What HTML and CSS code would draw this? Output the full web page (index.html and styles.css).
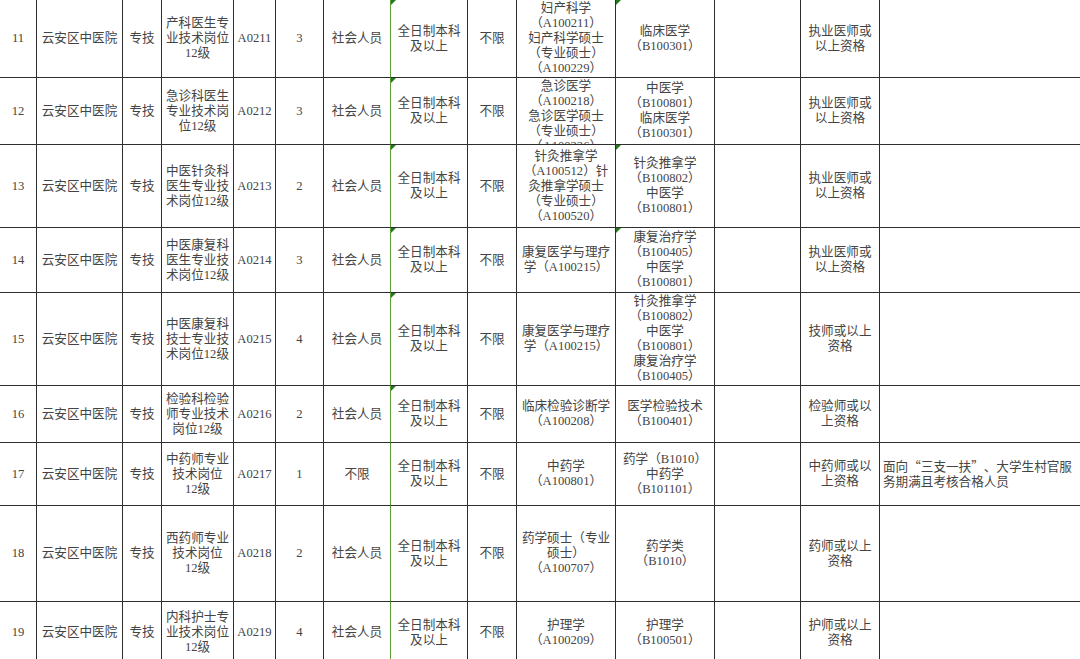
FILE: index.html
```html
<!DOCTYPE html>
<html lang="zh-CN">
<head>
<meta charset="utf-8">
<title>岗位表</title>
<link rel="stylesheet" href="styles.css">
</head>
<body>
<div class="sheet">
  <!-- row 11 -->
  <div class="cell"><div>11</div></div>
  <div class="cell"><div>云安区中医院</div></div>
  <div class="cell"><div>专技</div></div>
  <div class="cell"><div>产科医生专<br>业技术岗位<br>12级</div></div>
  <div class="cell"><div>A0211</div></div>
  <div class="cell"><div>3</div></div>
  <div class="cell g"><div>社会人员</div></div>
  <div class="cell tri"><div>全日制本科<br>及以上</div></div>
  <div class="cell"><div>不限</div></div>
  <div class="cell"><div>妇产科学<br>（A100211）<br>妇产科学硕士<br>（专业硕士）<br>（A100229）</div></div>
  <div class="cell tri"><div>临床医学<br>（B100301）</div></div>
  <div class="cell"><div></div></div>
  <div class="cell"><div>执业医师或<br>以上资格</div></div>
  <div class="cell last"><div></div></div>

  <!-- row 12 -->
  <div class="cell"><div>12</div></div>
  <div class="cell"><div>云安区中医院</div></div>
  <div class="cell"><div>专技</div></div>
  <div class="cell"><div>急诊科医生<br>专业技术岗<br>位12级</div></div>
  <div class="cell"><div>A0212</div></div>
  <div class="cell"><div>3</div></div>
  <div class="cell g"><div>社会人员</div></div>
  <div class="cell tri"><div>全日制本科<br>及以上</div></div>
  <div class="cell"><div>不限</div></div>
  <div class="cell top"><div>急诊医学<br>（A100218）<br>急诊医学硕士<br>（专业硕士）<br>（A100226）</div></div>
  <div class="cell"><div>中医学<br>（B100801）<br>临床医学<br>（B100301）</div></div>
  <div class="cell"><div></div></div>
  <div class="cell"><div>执业医师或<br>以上资格</div></div>
  <div class="cell last"><div></div></div>

  <!-- row 13 -->
  <div class="cell"><div>13</div></div>
  <div class="cell"><div>云安区中医院</div></div>
  <div class="cell"><div>专技</div></div>
  <div class="cell"><div>中医针灸科<br>医生专业技<br>术岗位12级</div></div>
  <div class="cell"><div>A0213</div></div>
  <div class="cell"><div>2</div></div>
  <div class="cell g"><div>社会人员</div></div>
  <div class="cell tri"><div>全日制本科<br>及以上</div></div>
  <div class="cell"><div>不限</div></div>
  <div class="cell"><div>针灸推拿学<br>（A100512）针<br>灸推拿学硕士<br>（专业硕士）<br>（A100520）</div></div>
  <div class="cell tri"><div>针灸推拿学<br>（B100802）<br>中医学<br>（B100801）</div></div>
  <div class="cell"><div></div></div>
  <div class="cell"><div>执业医师或<br>以上资格</div></div>
  <div class="cell last"><div></div></div>

  <!-- row 14 -->
  <div class="cell"><div>14</div></div>
  <div class="cell"><div>云安区中医院</div></div>
  <div class="cell"><div>专技</div></div>
  <div class="cell"><div>中医康复科<br>医生专业技<br>术岗位12级</div></div>
  <div class="cell"><div>A0214</div></div>
  <div class="cell"><div>3</div></div>
  <div class="cell g"><div>社会人员</div></div>
  <div class="cell tri"><div>全日制本科<br>及以上</div></div>
  <div class="cell"><div>不限</div></div>
  <div class="cell"><div>康复医学与理疗<br>学（A100215）</div></div>
  <div class="cell tri"><div>康复治疗学<br>（B100405）<br>中医学<br>（B100801）</div></div>
  <div class="cell"><div></div></div>
  <div class="cell"><div>执业医师或<br>以上资格</div></div>
  <div class="cell last"><div></div></div>

  <!-- row 15 -->
  <div class="cell"><div>15</div></div>
  <div class="cell"><div>云安区中医院</div></div>
  <div class="cell"><div>专技</div></div>
  <div class="cell"><div>中医康复科<br>技士专业技<br>术岗位12级</div></div>
  <div class="cell"><div>A0215</div></div>
  <div class="cell"><div>4</div></div>
  <div class="cell g"><div>社会人员</div></div>
  <div class="cell tri"><div>全日制本科<br>及以上</div></div>
  <div class="cell"><div>不限</div></div>
  <div class="cell"><div>康复医学与理疗<br>学（A100215）</div></div>
  <div class="cell"><div>针灸推拿学<br>（B100802）<br>中医学<br>（B100801）<br>康复治疗学<br>（B100405）</div></div>
  <div class="cell"><div></div></div>
  <div class="cell"><div>技师或以上<br>资格</div></div>
  <div class="cell last"><div></div></div>

  <!-- row 16 -->
  <div class="cell"><div>16</div></div>
  <div class="cell"><div>云安区中医院</div></div>
  <div class="cell"><div>专技</div></div>
  <div class="cell"><div>检验科检验<br>师专业技术<br>岗位12级</div></div>
  <div class="cell"><div>A0216</div></div>
  <div class="cell"><div>2</div></div>
  <div class="cell g"><div>社会人员</div></div>
  <div class="cell tri"><div>全日制本科<br>及以上</div></div>
  <div class="cell"><div>不限</div></div>
  <div class="cell"><div>临床检验诊断学<br>（A100208）</div></div>
  <div class="cell"><div>医学检验技术<br>（B100401）</div></div>
  <div class="cell"><div></div></div>
  <div class="cell"><div>检验师或以<br>上资格</div></div>
  <div class="cell last"><div></div></div>

  <!-- row 17 -->
  <div class="cell"><div>17</div></div>
  <div class="cell"><div>云安区中医院</div></div>
  <div class="cell"><div>专技</div></div>
  <div class="cell"><div>中药师专业<br>技术岗位<br>12级</div></div>
  <div class="cell"><div>A0217</div></div>
  <div class="cell"><div>1</div></div>
  <div class="cell g"><div>不限</div></div>
  <div class="cell"><div>全日制本科<br>及以上</div></div>
  <div class="cell"><div>不限</div></div>
  <div class="cell"><div>中药学<br>（A100801）</div></div>
  <div class="cell"><div>药学（B1010）<br>中药学<br>（B101101）</div></div>
  <div class="cell"><div></div></div>
  <div class="cell"><div>中药师或以<br>上资格</div></div>
  <div class="cell last left"><div>面向<span class="q">“</span>三支一扶<span class="q">”</span>、大学生村官服<br>务期满且考核合格人员</div></div>

  <!-- row 18 -->
  <div class="cell"><div>18</div></div>
  <div class="cell"><div>云安区中医院</div></div>
  <div class="cell"><div>专技</div></div>
  <div class="cell"><div>西药师专业<br>技术岗位<br>12级</div></div>
  <div class="cell"><div>A0218</div></div>
  <div class="cell"><div>2</div></div>
  <div class="cell g"><div>社会人员</div></div>
  <div class="cell"><div>全日制本科<br>及以上</div></div>
  <div class="cell"><div>不限</div></div>
  <div class="cell"><div>药学硕士（专业<br>硕士）<br>（A100707）</div></div>
  <div class="cell"><div>药学类<br>（B1010）</div></div>
  <div class="cell"><div></div></div>
  <div class="cell"><div>药师或以上<br>资格</div></div>
  <div class="cell last"><div></div></div>

  <!-- row 19 -->
  <div class="cell"><div>19</div></div>
  <div class="cell"><div>云安区中医院</div></div>
  <div class="cell"><div>专技</div></div>
  <div class="cell"><div>内科护士专<br>业技术岗位<br>12级</div></div>
  <div class="cell"><div>A0219</div></div>
  <div class="cell"><div>4</div></div>
  <div class="cell g"><div>社会人员</div></div>
  <div class="cell"><div>全日制本科<br>及以上</div></div>
  <div class="cell"><div>不限</div></div>
  <div class="cell"><div>护理学<br>（A100209）</div></div>
  <div class="cell"><div>护理学<br>（B100501）</div></div>
  <div class="cell"><div></div></div>
  <div class="cell"><div>护师或以上<br>资格</div></div>
  <div class="cell last"><div></div></div>
</div>
</body>
</html>
```

FILE: styles.css
```css
html, body {
  margin: 0;
  padding: 0;
  background: #ffffff;
  overflow: hidden;
}

.sheet {
  display: grid;
  grid-template-columns: 37px 86px 39px 72px 42px 48px 67px 77px 49px 99px 99px 86px 79px 260px;
  grid-template-rows: 78px 67px 83px 65px 93px 57px 63px 96px 62px;
  width: max-content;
  font-family: "Liberation Serif", "Noto Sans CJK SC", serif;
  font-size: 12.6px;
  line-height: 15px;
  color: #444444;
}

.cell {
  position: relative;
  display: flex;
  align-items: center;
  justify-content: center;
  text-align: center;
  white-space: nowrap;
  overflow: hidden;
  border-right: 1px solid #2e2e2e;
  border-bottom: 1px solid #2e2e2e;
}

.cell.top {
  align-items: flex-start;
  padding-top: 1px;
}

.cell.g {
  border-right-color: #5c9e34;
}

.cell.last {
  border-right: none;
}

.cell.left {
  justify-content: flex-start;
  text-align: left;
  padding-left: 3px;
}

.q {
  font-family: "Noto Sans CJK SC", sans-serif;
  display: inline-block;
  width: 1em;
  text-align: center;
}

.tri::before {
  content: "";
  position: absolute;
  left: 0;
  top: 0;
  width: 0;
  height: 0;
  border-top: 5px solid #237a1c;
  border-right: 5px solid transparent;
}
```
